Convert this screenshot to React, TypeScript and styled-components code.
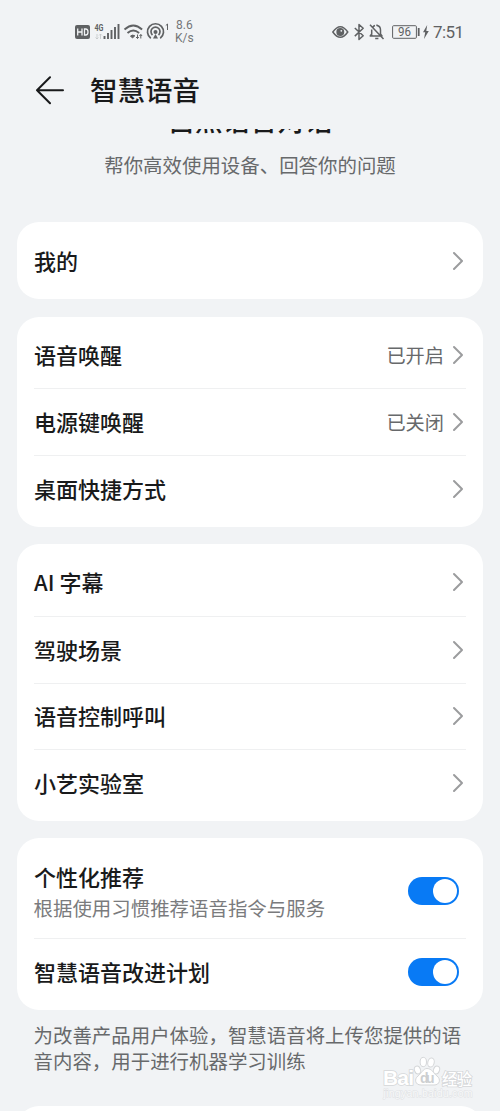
import React from 'react';
import styled, { createGlobalStyle } from 'styled-components';

const GlobalStyle = createGlobalStyle`
  *, *::before, *::after { box-sizing: border-box; }
  html, body { margin: 0; height: 1111px; overflow: hidden; background: #f1f3f5; }
  body { font-family: "Noto Sans CJK SC", "Noto Sans", sans-serif; color: #191a1b; }
`;

const Screen = styled.main`
  position: relative;
  width: 500px;
  height: 1111px;
  overflow: hidden;
  background: #f1f3f5;
`;

const StatusBar = styled.header`
  display: flex;
  justify-content: space-between;
  align-items: center;
  height: 64px;
  padding: 0 36px 0 74px;
  color: #5f6163;
  font-family: Roboto, sans-serif;
`;

const StatusGroup = styled.div`
  display: flex;
  align-items: center;
`;

const StatusSvg = styled.svg<{ $gap?: number }>`
  display: block;
  flex: none;
  margin-right: ${({ $gap = 0 }) => $gap}px;
  overflow: visible;
`;

const Speed = styled.div`
  font-size: 12px;
  line-height: 13px;
  text-align: center;
  color: #747678;
`;

const Clock = styled.time`
  font-size: 17px;
  line-height: 20px;
  width: 31px;
  white-space: nowrap;
  letter-spacing: -0.6px;
`;

const TitleBar = styled.div`
  display: flex;
  align-items: center;
  height: 53px;
  padding-left: 35px;
  gap: 25px;
`;

const Title = styled.h1`
  margin: -3px 0 0;
  font-size: 27.5px;
  line-height: 40px;
  font-weight: 500;
`;

const Intro = styled.section`
  margin-top: 12px;
  height: 93px;
  overflow: hidden;
  text-align: center;
`;

const IntroTitle = styled.h2`
  margin: -30px 0 0;
  font-size: 27.5px;
  line-height: 40px;
  font-weight: 500;
`;

const IntroText = styled.p`
  margin: 12px 0 0;
  font-size: 19.45px;
  line-height: 28px;
  color: #67696b;
`;

const Cards = styled.div`
  display: flex;
  flex-direction: column;
  gap: 17.2px;
  padding: 0 17px;
`;

const Card = styled.section`
  padding: 5px 17px;
  border-radius: 22px;
  background: #fff;
`;

const Row = styled.div<{ $height?: number }>`
  display: flex;
  align-items: center;
  height: ${({ $height = 66.75 }) => $height}px;
  & + & { border-top: 1px solid #eff0f1; }
`;

const RowText = styled.div`
  flex: 1;
`;

const Label = styled.div`
  margin-top: -2px;
  font-size: 22px;
  line-height: 32px;
  font-weight: 500;
`;

const Detail = styled.div`
  font-size: 19.45px;
  line-height: 28px;
  margin: 2px 0 -3px -0.5px;
  color: #7a7b7d;
`;

const Value = styled.span`
  font-size: 19.2px;
  line-height: 28px;
  margin-right: 8px;
  color: #67696b;
`;

const ChevronSvg = styled.svg`
  display: block;
  margin-right: 2px;
`;

const Toggle = styled.button`
  width: 51px;
  height: 28px;
  margin: 0 7px 0 0;
  padding: 2px;
  display: flex;
  justify-content: flex-end;
  border: 0;
  border-radius: 14px;
  background: #087af5;
`;

const Knob = styled.span`
  width: 24px;
  height: 24px;
  border-radius: 50%;
  background: #fff;
`;

const Note = styled.p`
  margin: 12px 34px 0 33.5px;
  font-size: 19.45px;
  line-height: 26px;
  color: #67696b;
  white-space: nowrap;
`;

const NextCard = styled.section`
  height: 60px;
  margin: 32px 17px 0;
  border-radius: 22px;
  background: #fff;
`;

const Watermark = styled.svg`
  position: absolute;
  left: 380px;
  top: 1054px;
`;

const Chevron = () => (
  <ChevronSvg width="12" height="20" viewBox="0 0 12 20" fill="none" stroke="#9b9c9e" strokeWidth="2" strokeLinecap="round" strokeLinejoin="round">
    <path d="M2 2 10 10 2 18" />
  </ChevronSvg>
);

const LinkRow = ({ label, value, height }: { label: string; value?: string; height?: number }) => (
  <Row $height={height}>
    <RowText><Label>{label}</Label></RowText>
    {value && <Value>{value}</Value>}
    <Chevron />
  </Row>
);

const ToggleRow = ({ label, detail, height }: { label: string; detail?: string; height: number }) => (
  <Row $height={height}>
    <RowText>
      <Label>{label}</Label>
      {detail && <Detail>{detail}</Detail>}
    </RowText>
    <Toggle role="switch" aria-checked="true" aria-label={label}><Knob /></Toggle>
  </Row>
);

const NetworkIcons = () => (
  <StatusSvg width="95" height="24" viewBox="74 20 95 24" $gap={6}>
    <rect x="75" y="25" width="15" height="14" rx="2" fill="#5f6163" />
    <path d="M77.7 28.5v7M82 28.5v7M77.7 32H82M84.5 29v6h1.2q2.3 0 2.3-3t-2.3-3z" fill="none" stroke="#f1f3f5" strokeWidth="1.3" />
    <text x="94.5" y="30.5" fontSize="9" fontWeight="700" textLength="9" lengthAdjust="spacingAndGlyphs" fill="#5f6163">4G</text>
    <path d="M97 34v5m-1.5-1.5L97 39l1.5-1.5M100.500 39v-5m-1.500 1.500 1.500-1.500 1.500 1.500" stroke="#c3c5c7" strokeWidth="0.800" fill="none" />
    <path d="M104.500 36v3M108 33v6M111.500 30v9M115 27v12M118.500 24v15" stroke="#5f6163" strokeWidth="1.900" />
    <g fill="none" stroke="#5f6163" strokeWidth="1.900">
      <path d="M124.500 29.500q8.800-8 17.600 0M127.500 33q5.800-5 11.600 0" />
      <path d="M130.500 36q2.200-1.700 4.300-.2L132.500 38z" fill="#5f6163" strokeWidth="1" />
      <path d="M137.500 34.500v4m-1.500-1.500 1.500 1.500 1.300-1.500M140.800 38.500v-4m-1.300 1.500 1.300-1.500 1.300 1.500" strokeWidth="1" />
      <path d="M150.800 38.200a8 8 0 1 1 9.400 0M152.500 35a4.500 4.500 0 1 1 6 0" strokeWidth="1.700" />
    </g>
    <circle cx="155.500" cy="32" r="2" fill="#5f6163" />
    <path d="M153 38.500 155.500 34l2.500 4.500z" fill="#5f6163" />
    <path d="M165.800 25.500 167.500 24v6" fill="none" stroke="#5f6163" strokeWidth="1" />
  </StatusSvg>
);

const DeviceIcons = () => (
  <StatusSvg width="100" height="24" viewBox="332 20 100 24" $gap={1.5}>
    <g fill="none" stroke="#5f6163" strokeWidth="1.500" strokeLinejoin="round">
      <path d="M332.800 32q7.500-10.500 15 0-7.500 10.500-15 0z" />
      <circle cx="340.300" cy="32" r="3.200" fill="#5f6163" />
      <path d="M354.800 28l8.400 7.800-4.200 3.700v-15l4.200 3.800-8.400 7.800" />
      <path d="M371.500 36v-1.200L372.300 36H382l-1.500-2V30q0-4-3.500-4.500v-1M375 25.600q-1.200.3-2 1.400M371.700 29.500V34l-1.500 2h11M375.200 38.500h3.200M370 24.800 383.500 39" />
      <rect x="392.600" y="25.700" width="23.800" height="12.600" rx="1" strokeWidth="1" />
    </g>
    <text x="398" y="36.200" fontSize="12" textLength="13" lengthAdjust="spacingAndGlyphs" fill="#5f6163">96</text>
    <rect x="417.800" y="28" width="1.800" height="8" fill="#5f6163" />
    <path d="M427.200 25 423 32.300h2.200L424 39l4.800-8h-2.500z" fill="#5f6163" />
    <circle cx="341.300" cy="30.800" r=".9" fill="#f1f3f5" />
  </StatusSvg>
);

const BaiduMark = () => (
  <Watermark width="96" height="48" viewBox="380 1054 96 48" fontFamily='"Liberation Sans", "Noto Sans CJK SC", sans-serif'>
    <g fill="#fff" stroke="#d5d7d9" strokeWidth="1">
      <ellipse cx="417.500" cy="1070" rx="3" ry="4" transform="rotate(-20 417.500 1070)" />
      <ellipse cx="423.300" cy="1062" rx="3.200" ry="4.600" />
      <ellipse cx="431" cy="1062.500" rx="3.200" ry="4.600" transform="rotate(12 431 1062.500)" />
      <ellipse cx="436.500" cy="1070" rx="3" ry="4" transform="rotate(20 436.500 1070)" />
      <path d="M427 1068.500c-4 0-5.500 5-9 7.500-4 3-3 9 3 9h13c6 0 7-6 3-9-3.500-2.500-5-7.500-10-7.500z" />
      <g strokeWidth="1.600" paintOrder="stroke" fontWeight="700">
        <text x="383" y="1085" fontSize="21" textLength="31">Bai</text>
        <text x="442" y="1084.500" fontSize="15.500" textLength="30" fontWeight="500" fontFamily='"Noto Sans CJK SC", sans-serif'>经验</text>
      </g>
    </g>
    <text x="420" y="1083" fontSize="14" fontWeight="700" textLength="14.500" fill="#cdcfd1">du</text>
    <text x="383.500" y="1096.500" fontSize="10.500" textLength="89" fill="#f8f9fa" stroke="#dfe1e3" strokeWidth="1" paintOrder="stroke">jingyan.baidu.com</text>
  </Watermark>
);

export default function App() {
  return (
    <Screen>
      <GlobalStyle />
      <StatusBar>
        <StatusGroup>
          <NetworkIcons />
          <Speed>8.6<br />K/s</Speed>
        </StatusGroup>
        <StatusGroup>
          <DeviceIcons />
          <Clock>7:51</Clock>
        </StatusGroup>
      </StatusBar>
      <TitleBar>
        <svg width="30" height="30" viewBox="0 0 30 30" fill="none" stroke="#191a1b" strokeWidth="2" strokeLinecap="round" strokeLinejoin="round">
          <path d="M28 14.300H2M15 1.300 2 14.300l13 13" />
        </svg>
        <Title>智慧语音</Title>
      </TitleBar>
      <Intro>
        <IntroTitle>自然语言对话</IntroTitle>
        <IntroText>帮你高效使用设备、回答你的问题</IntroText>
      </Intro>
      <Cards>
        <Card><LinkRow label="我的" height={67.4} /></Card>
        <Card>
          <LinkRow label="语音唤醒" value="已开启" />
          <LinkRow label="电源键唤醒" value="已关闭" />
          <LinkRow label="桌面快捷方式" />
        </Card>
        <Card>
          <LinkRow label="AI 字幕" />
          <LinkRow label="驾驶场景" />
          <LinkRow label="语音控制呼叫" />
          <LinkRow label="小艺实验室" />
        </Card>
        <Card>
          <ToggleRow label="个性化推荐" detail="根据使用习惯推荐语音指令与服务" height={94.7} />
          <ToggleRow label="智慧语音改进计划" height={67.4} />
        </Card>
      </Cards>
      <Note>为改善产品用户体验，智慧语音将上传您提供的语<br />音内容，用于进行机器学习训练</Note>
      <NextCard />
      <BaiduMark />
    </Screen>
  );
}
